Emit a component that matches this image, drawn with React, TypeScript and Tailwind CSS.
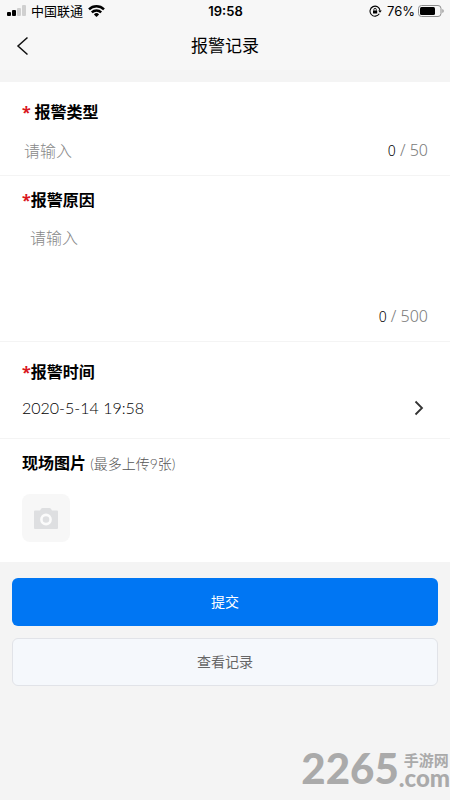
import { useState } from "react";
import type { ReactNode } from "react";

function StatusBar() {
  return (
    <div className="grid grid-cols-3 items-center h-[22px] pl-[7px] pr-[6px] font-['Inter','Noto_Sans_CJK_SC',sans-serif] text-[13px] leading-[22px] text-black">
      <div className="flex items-center gap-[5px]">
        <svg width="19" height="12" viewBox="0 0 19 12">
          <rect x="0" y="7" width="4" height="4" rx="1" fill="#000" />
          <rect x="5" y="5" width="4" height="6" rx="1" fill="#000" />
          <rect x="10" y="3" width="4" height="8" rx="1" fill="#d0d0d0" />
          <rect x="15" y="0" width="4" height="11" rx="1" fill="#d0d0d0" />
        </svg>
        <span>中国联通</span>
        <svg width="17" height="12" viewBox="0 0 17 12" fill="none" stroke="#000" strokeWidth="2.4">
          <path d="M1 4.4a10.6 10.6 0 0 1 15 0" />
          <path d="M3.8 7.4a6.7 6.7 0 0 1 9.4 0" />
          <path d="M8.5 12 5.9 9.4a3.7 3.7 0 0 1 5.2 0z" fill="#000" stroke="none" />
        </svg>
      </div>
      <span className="text-center font-semibold">19:58</span>
      <div className="flex items-center justify-end">
        <svg className="mr-[5px]" width="13" height="12" viewBox="0 0 13 12" fill="none" stroke="#000">
          <path d="M10.3 8.8A5 5 0 1 1 11 5.6" strokeWidth="1.1" />
          <path d="M9.2 5.4h3.6L11 7.8z" fill="#000" stroke="none" />
          <rect x="4" y="5.4" width="4.2" height="3.2" rx="0.4" fill="#000" stroke="none" />
          <path d="M4.9 5.6V4.5a1.2 1.2 0 0 1 2.4 0v1.1" strokeWidth="0.9" />
        </svg>
        <span className="mr-[3px]">76%</span>
        <svg width="26" height="12" viewBox="0 0 26 12">
          <rect x="0.5" y="0.5" width="22.5" height="11" rx="3" fill="none" stroke="#8e8e8e" />
          <rect x="2" y="2" width="15" height="8" rx="1.5" fill="#000" />
          <path d="M24.4 4v4a2.2 2.2 0 0 0 0-4z" fill="#8e8e8e" />
        </svg>
      </div>
    </div>
  );
}

function Required() {
  return <span className="font-['Noto_Sans'] text-[#d9161c]">*</span>;
}

function Counter({ count, max }: { count: number; max: number }) {
  return (
    <span className="shrink-0 font-['Noto_Sans'] font-light text-[16px] leading-[24px] text-[#7a7a7a]">
      <span className="text-[14px] text-black">{count}</span> / {max}
    </span>
  );
}

function Section({ className, children }: { className: string; children: ReactNode }) {
  return <div className={`flex flex-col px-[22px] bg-white ${className}`}>{children}</div>;
}

function App() {
  const [type, setType] = useState("");
  const [reason, setReason] = useState("");

  return (
    <div className="flex flex-col min-h-screen bg-[#f4f4f4] font-['Lato','Noto_Sans_CJK_SC',sans-serif] text-[16px] leading-[24px] text-black">
      <header className="bg-[#f7f7f7]">
        <StatusBar />
        <div className="grid grid-cols-3 items-center h-12 px-4">
          <button type="button" aria-label="返回" className="w-6">
            <svg width="13" height="20" viewBox="0 0 13 20" fill="none" stroke="#111" strokeWidth="1.5">
              <path d="M11.5 1.5 2 10l9.5 8.5" />
            </svg>
          </button>
          <h1 className="text-center text-[17px]">报警记录</h1>
        </div>
      </header>

      <form className="mt-3">
        <Section className="pt-[18px] pb-3 border-b border-[#f4f4f4]">
          <label htmlFor="type" className="font-bold">
            <Required /> 报警类型
          </label>
          <div className="flex items-center mt-[14px]">
            <input
              id="type"
              type="text"
              maxLength={50}
              placeholder="请输入"
              value={type}
              onChange={(e) => setType(e.target.value)}
              className="flex-1 min-w-0 h-6 px-[2px] outline-none placeholder:font-light placeholder:text-[#888]"
            />
            <Counter count={type.length} max={50} />
          </div>
        </Section>

        {/* 报警原因 */}
        <Section className="pt-3 pb-3 border-b border-[#f4f4f4]">
          <label htmlFor="reason" className="font-bold">
            <Required />报警原因
          </label>
          <textarea
            id="reason"
            maxLength={500}
            placeholder="请输入"
            value={reason}
            onChange={(e) => setReason(e.target.value)}
            className="block w-full h-[78px] mt-[14px] px-2 resize-none outline-none placeholder:font-light placeholder:text-[#888]"
          />
          <div className="text-right">
            <Counter count={reason.length} max={500} />
          </div>
        </Section>

        {/* 报警时间 */}
        <Section className="pt-[18px] pb-[18px] border-b border-[#f4f4f4]">
          <span id="time" className="font-bold">
            <Required />报警时间
          </span>
          <button type="button" aria-describedby="time" className="flex items-center justify-between mt-3">
            <span className="font-light">2020-5-14 19:58</span>
            <svg className="mr-1" width="10" height="16" viewBox="0 0 10 16" fill="none" stroke="#333" strokeWidth="1.8">
              <path d="m1.5 1.5 6.5 6.5-6.5 6.5" />
            </svg>
          </button>
        </Section>

        {/* 图片上传 */}
        <Section className="pt-3 pb-5">
          <div>
            <span className="font-bold">现场图片</span>{" "}
            <span className="font-light text-[14px] text-[#555]">(最多上传9张)</span>
          </div>
          <label className="relative flex items-center justify-center size-12 mt-[18px] rounded-lg bg-[#f7f7f7]">
            <svg width="24" height="21" viewBox="0 0 24 21">
              <path
                d="M1 2.500H6L7 1q.5-1 1.500-1h7q1 0 1.500 1l1 1.500h5q1 0 1 1V20q0 1-1 1H1q-1 0-1-1V3.500q0-1 1-1z"
                fill="#dedfe1"
              />
              <circle cx="12" cy="11.5" r="4.600" fill="none" stroke="#fbfbfb" strokeWidth="2.600" />
            </svg>
            <input type="file" accept="image/*" multiple aria-label="上传图片" className="sr-only" />
          </label>
        </Section>

        <div className="flex flex-col gap-3 px-3 pt-4 text-[14px]">
          <button type="submit" className="h-12 rounded-md bg-[#0076f3] text-white">提交</button>
          <button type="button" className="h-12 rounded-md border border-[#e1e3e8] bg-[#f5f8fc] text-[#666]">查看记录</button>
        </div>
      </form>

      <footer className="flex items-end justify-end mt-auto pb-3 font-black text-[#aaa]">
        <span className="text-[42px] leading-[40px]">2265</span>
        <span className="flex flex-col">
          <span className="pl-[5px] text-[15px] leading-[16px] font-bold">手游网</span>
          <span className="text-[24px] leading-[20px]">.com</span>
        </span>
      </footer>
    </div>
  );
}

export default App;
